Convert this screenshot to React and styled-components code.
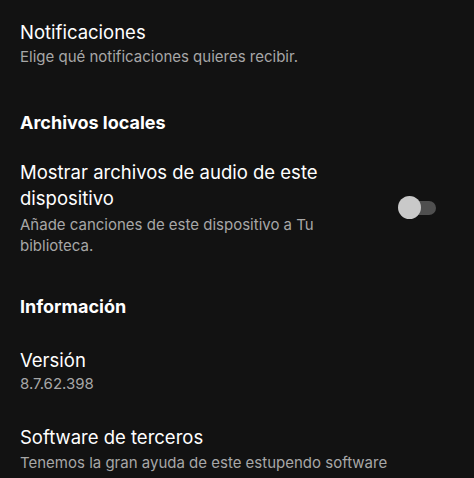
import styled, { createGlobalStyle } from 'styled-components';

const GlobalStyle = createGlobalStyle`
  body {
    margin: 0;
    background: #121212;
    font-family: "Inter", "Liberation Sans", sans-serif;
    -webkit-font-smoothing: antialiased;
  }
`;

const Page = styled.div`
  width: 474px;
  height: 478px;
  overflow: hidden;
  box-sizing: border-box;
  padding: 19px 20px 0;
  background: #121212;
  display: flex;
  flex-direction: column;
`;

const Section = styled.section`
  margin-top: ${({ $gap }) => $gap || 0}px;
`;

const Heading = styled.h2`
  margin: 0;
  font-size: 18px;
  line-height: 24px;
  font-weight: 700;
  color: #ffffff;
`;

const Row = styled.div`
  display: flex;
  align-items: center;
  justify-content: space-between;
  margin-top: ${({ $gap }) => $gap || 0}px;
`;

const Text = styled.div`
  max-width: ${({ $max }) => $max || 440}px;
`;

const Title = styled.div`
  font-size: 18.5px;
  line-height: 26px;
  color: #ffffff;
`;

const Sub = styled.div`
  font-size: 15px;
  line-height: 21px;
  color: #a7a7a7;
  margin-top: ${({ $gap }) => $gap || 0}px;
`;

const Toggle = styled.div`
  position: relative;
  width: 38px;
  height: 24px;
  margin-right: 18px;
  flex-shrink: 0;
  &::before {
    content: "";
    position: absolute;
    left: 6px;
    right: 0;
    top: 5px;
    height: 14px;
    border-radius: 7px;
    background: #4f4f4f;
  }
  &::after {
    content: "";
    position: absolute;
    left: 0;
    top: 0;
    width: 23px;
    height: 23px;
    border-radius: 50%;
    background: #c9c9c9;
  }
`;

export default function App() {
  return (
    <>
      <GlobalStyle />
      <Page>
        <Row>
          <Text>
            <Title>Notificaciones</Title>
            <Sub $gap={1}>Elige qué notificaciones quieres recibir.</Sub>
          </Text>
        </Row>

        <Section $gap={44}>
          <Heading>Archivos locales</Heading>
          <Row $gap={24}>
            <Text $max={326}>
              <Title>Mostrar archivos de audio de este dispositivo</Title>
              <Sub $gap={3}>Añade canciones de este dispositivo a Tu biblioteca.</Sub>
            </Text>
            <Toggle />
          </Row>
        </Section>

        <Section $gap={39}>
          <Heading>Información</Heading>
          <Row $gap={28}>
            <Text>
              <Title>Versión</Title>
              <Sub>8.7.62.398</Sub>
            </Text>
          </Row>
          <Row $gap={30}>
            <Text>
              <Title>Software de terceros</Title>
              <Sub $gap={2}>Tenemos la gran ayuda de este estupendo software</Sub>
            </Text>
          </Row>
        </Section>
      </Page>
    </>
  );
}
